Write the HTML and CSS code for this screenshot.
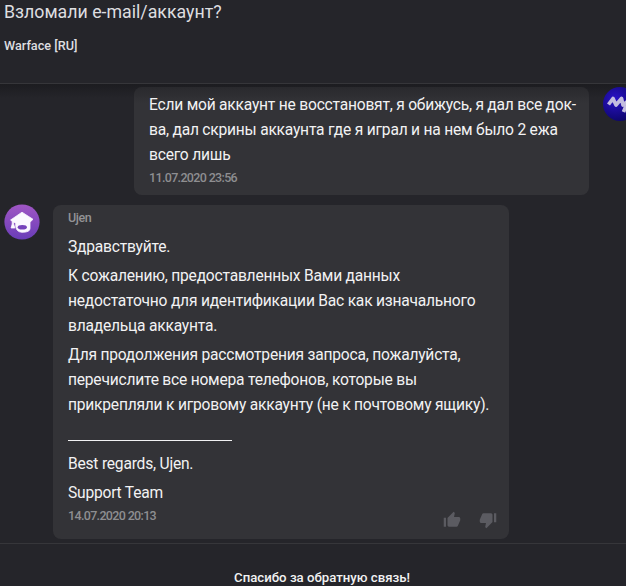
FILE: index.html
```
<!DOCTYPE html>
<html lang="ru">
<head>
    <meta charset="UTF-8">
    <meta name="viewport" content="width=device-width, initial-scale=1.0">
    <title>Взломали e-mail/аккаунт?</title>
    <link rel="stylesheet" href="styles.css">
</head>
<body>
    <div class="ticket">
        <header class="ticket-header">
            <h1>Взломали e-mail/аккаунт?</h1>
            <div class="game">Warface [RU]</div>
        </header>

        <main class="messages">
            <div class="message outgoing">
                <div class="bubble">
                    <p>Если мой аккаунт не восстановят, я обижусь, я дал все док-<br>ва, дал скрины аккаунта где я играл и на нем было 2 ежа<br>всего лишь</p>
                    <div class="date">11.07.2020 23:56</div>
                </div>
                <svg class="avatar" viewBox="0 0 34 34">
                    <defs>
                        <radialGradient id="userBg" cx="0.35" cy="0.35" r="0.7">
                            <stop offset="0" stop-color="#2a12c8"/>
                            <stop offset="1" stop-color="#0c0668"/>
                        </radialGradient>
                    </defs>
                    <circle cx="17" cy="17" r="17" fill="url(#userBg)"/>
                    <path d="M5.5 17.5L10 11.5L13 18L18.500 11.5L20 18L25 14L20.500 25" fill="none" stroke="#c3bddf" stroke-width="3.700" stroke-linejoin="round"/>
                </svg>
            </div>

            <div class="message incoming">
                <svg class="avatar" viewBox="0 0 36 36">
                    <defs>
                        <linearGradient id="supportBg" x1="0" y1="0" x2="0" y2="1">
                            <stop offset="0" stop-color="#a056c4"/>
                            <stop offset="1" stop-color="#6a3db8"/>
                        </linearGradient>
                    </defs>
                    <circle cx="18" cy="18" r="17.6" fill="url(#supportBg)"/>
                    <path d="M18 8.2L29 15.3L26 18.2V24.5Q26 28.3 18 28.3Q12.5 28 11.7 22.5V19.3L9.6 18V20L10.9 24H7.1L8.2 20V17.4L6.6 16Z" fill="#fbf8ff" stroke="#fbf8ff" stroke-width="0.8" stroke-linejoin="round"/>
                    <ellipse cx="18.3" cy="23.3" rx="4.6" ry="2.3" fill="#7642bb"/>
                </svg>
                <div class="bubble">
                    <div class="author">Ujen</div>
                    <p>Здравствуйте.</p>
                    <p>К сожалению, предоставленных Вами данных<br>недостаточно для идентификации Вас как изначального<br>владельца аккаунта.</p>
                    <p>Для продолжения рассмотрения запроса, пожалуйста,<br>перечислите все номера телефонов, которые вы<br>прикрепляли к игровому аккаунту (не к почтовому ящику).</p>
                    <div class="signature-line"></div>
                    <p>Best regards, Ujen.</p>
                    <p>Support Team</p>
                    <div class="bubble-footer">
                        <div class="date">14.07.2020 20:13</div>
                        <div class="votes">
                            <svg class="vote" viewBox="0 0 24 24"><path d="M1 21h3V9H1v12zm22-11c0-1.100-.9-2-2-2h-6.310l.95-4.570.03-.32c0-.41-.17-.79-.44-1.060L14.170 1 7.590 7.590C6.500 8.500 6 8.800 6 10v9c0 1.100 1 2 3 2h9c.83 0 1.540-.5 1.840-1.220l3.020-7.050c.09-.23.14-.47.14-.73v-2z"/></svg>
                            <svg class="vote down" viewBox="0 0 24 24"><path d="M1 21h3V9H1v12zm22-11c0-1.100-.9-2-2-2h-6.310l.95-4.570.03-.32c0-.41-.17-.79-.44-1.060L14.170 1 7.590 7.590C6.500 8.500 6 8.800 6 10v9c0 1.100 1 2 3 2h9c.83 0 1.540-.5 1.840-1.220l3.020-7.050c.09-.23.14-.47.14-.73v-2z"/></svg>
                        </div>
                    </div>
                </div>
            </div>
        </main>

        <footer class="ticket-footer">Спасибо за обратную связь!</footer>
    </div>
</body>
</html>
```
FILE: styles.css
```
* {
    box-sizing: border-box;
}
body {
    margin: 0;
    background: #25252a;
    color: #f2f2f3;
    font-family: Roboto, sans-serif;
    overflow: hidden;
}
.ticket {
    display: flex;
    flex-direction: column;
    width: 626px;
    height: 586px;
}
.ticket-header {
    height: 84px;
    padding: 1px 4px 0;
    border-bottom: 1px solid #36363a;
}
h1 {
    margin: 0;
    font-size: 17.75px;
    font-weight: 400;
    line-height: 22px;
    color: #dedee0;
}
.game {
    margin-top: 15px;
    font-size: 12.7px;
    font-weight: 500;
    line-height: 16px;
    color: #dedee0;
}
.messages {
    height: 459px;
    padding-top: 3px;
    background: linear-gradient(#1c1c20, #25252a 14px);
}
.message {
    display: flex;
    align-items: flex-start;
}
.bubble {
    border-radius: 8px;
    background: #333337;
}
.bubble p {
    margin: 0 0 4.6px;
    font-size: 15.6px;
    line-height: 24.8px;
    letter-spacing: -0.22px;
    white-space: nowrap;
}
.outgoing {
    margin-left: 134px;
    gap: 14px;
}
.outgoing .bubble {
    flex: none;
    width: 455px;
    height: 108px;
    padding: 6px 15px 0;
    background: linear-gradient(#29292d, #333337 16px);
}
.outgoing .bubble p {
    margin-bottom: 3px;
}
.outgoing .avatar {
    flex: none;
    width: 34px;
    height: 34px;
}
.incoming {
    margin: 10px 0 0 4px;
    gap: 13px;
}
.incoming .avatar {
    width: 36px;
    height: 36px;
    margin-top: -1px;
}
.incoming .bubble {
    width: 456px;
    height: 334px;
    padding: 5px 15px 0;
}
.author {
    margin-bottom: 9px;
    font-size: 12.5px;
    font-weight: 500;
    line-height: 16px;
    letter-spacing: -0.4px;
    color: #929295;
}
.date {
    font-size: 12.5px;
    font-weight: 500;
    line-height: 16px;
    letter-spacing: -0.66px;
    color: #8e8e91;
}
.signature-line {
    width: 164px;
    height: 19px;
    margin-bottom: 10.4px;
    border-bottom: 1px solid #f2f2f3;
}
.bubble-footer {
    display: flex;
    justify-content: space-between;
    margin-top: -7px;
}
.bubble-footer .date {
    padding-top: 4px;
}
.votes {
    display: flex;
    gap: 18px;
    margin-right: -3px;
    padding-top: 7px;
}
.vote {
    width: 18px;
    height: 18px;
    fill: #5b5b61;
}
.down {
    transform: rotate(180deg);
}
.ticket-footer {
    flex: 1;
    padding: 26px 0 0 18px;
    border-top: 1px solid #36363a;
    font-size: 13.2px;
    font-weight: 500;
    line-height: 16px;
    text-align: center;
    white-space: nowrap;
}
```
